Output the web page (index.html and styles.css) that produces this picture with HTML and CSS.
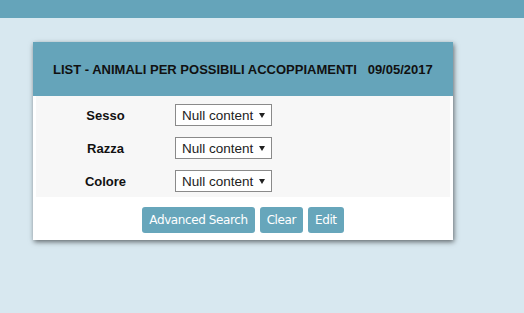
FILE: index.html
```html
<!DOCTYPE html>
<html lang="en">
<head>
    <meta charset="UTF-8">
    <meta name="viewport" content="width=device-width, initial-scale=1.0">
    <title>Animali</title>
    <link rel="stylesheet" href="styles.css">
</head>
<body>
    <div class="top-bar"></div>
    <div class="page">
        <div class="search-card">
            <div class="card-header">
                <h1>LIST - ANIMALI PER POSSIBILI ACCOPPIAMENTI&nbsp;&nbsp;&nbsp;09/05/2017</h1>
            </div>
            <div class="filters">
                <div class="filter-row">
                    <label for="sesso">Sesso</label>
                    <span class="select-wrap"><select id="sesso"><option>Null content</option></select></span>
                </div>
                <div class="filter-row">
                    <label for="razza">Razza</label>
                    <span class="select-wrap"><select id="razza"><option>Null content</option></select></span>
                </div>
                <div class="filter-row">
                    <label for="colore">Colore</label>
                    <span class="select-wrap"><select id="colore"><option>Null content</option></select></span>
                </div>
            </div>
            <div class="actions">
                <button type="button">Advanced Search</button>
                <button type="button">Clear</button>
                <button type="button">Edit</button>
            </div>
        </div>
    </div>
</body>
</html>
```

FILE: styles.css
```css
body {
    margin: 0;
    font-family: "Liberation Sans", Arial, sans-serif;
    background-color: #d8e8f0;
    height: 313px;
}

.top-bar {
    height: 18px;
    background-color: #65a4ba;
}

.page {
    padding: 24px 0 0 33px;
}

.search-card {
    width: 420px;
    background-color: #ffffff;
    box-shadow: 1px 2px 5px rgba(0, 0, 0, 0.55);
}

.card-header {
    height: 54px;
    background-color: #65a4ba;
    display: flex;
    align-items: center;
    padding-left: 20px;
}

h1 {
    margin: 0;
    font-size: 13px;
    font-weight: bold;
    color: #111;
    white-space: pre;
}

.filters {
    margin: 0 3px;
    background-color: #f7f7f7;
    padding: 8px 0 5px;
}

.filter-row {
    display: flex;
    align-items: center;
    height: 22px;
    margin-bottom: 11px;
}

.filter-row:last-child {
    margin-bottom: 0;
}

label {
    width: 139px;
    text-align: center;
    font-size: 13px;
    font-weight: bold;
    color: #111;
}

.select-wrap {
    position: relative;
    display: inline-block;
}

.select-wrap::after {
    content: "";
    position: absolute;
    right: 7px;
    top: 9px;
    border-left: 3px solid transparent;
    border-right: 3px solid transparent;
    border-top: 5px solid #222;
    pointer-events: none;
}

select {
    appearance: none;
    -webkit-appearance: none;
    display: block;
    width: 97px;
    height: 22px;
    font-family: "Liberation Sans", Arial, sans-serif;
    font-size: 13.5px;
    color: #222;
    border: 1px solid #8a8a8a;
    border-radius: 0;
    background-color: #fff;
    padding: 0 0 0 6px;
}

.actions {
    display: flex;
    justify-content: center;
    gap: 5px;
    padding: 10px 0 7px;
}

button {
    height: 26px;
    padding: 0 7px;
    background-color: #67a6bb;
    color: #fff;
    border: none;
    border-radius: 3px;
    font-family: "DejaVu Sans", Tahoma, sans-serif;
    font-size: 12px;
    letter-spacing: -0.4px;
}
```
